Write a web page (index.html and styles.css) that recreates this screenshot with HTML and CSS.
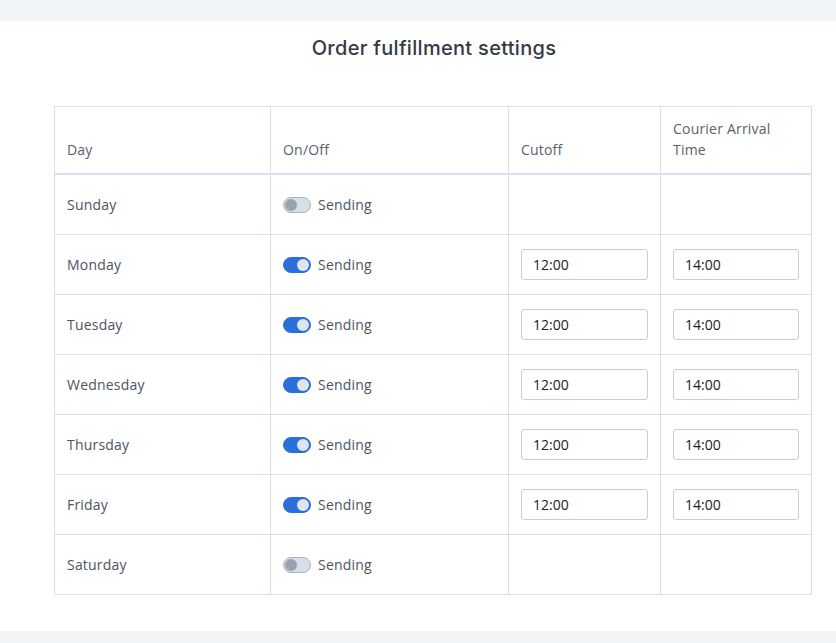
FILE: index.html
```html
<!DOCTYPE html>
<html>
<head>
<meta charset="utf-8">
<link rel="stylesheet" href="styles.css">
</head>
<body>
<div class="panel">
  <h1 class="title">Order fulfillment settings</h1>
  <table class="grid">
    <colgroup>
      <col class="c1"><col class="c2"><col class="c3"><col class="c4">
    </colgroup>
    <thead>
      <tr><th>Day</th><th>On/Off</th><th>Cutoff</th><th>Courier Arrival Time</th></tr>
    </thead>
    <tbody>
      <tr><td>Sunday</td><td><span class="sw"><span class="tg"></span>Sending</span></td><td></td><td></td></tr>
      <tr><td>Monday</td><td><span class="sw"><span class="tg on"></span>Sending</span></td><td><input class="time" value="12:00"></td><td><input class="time" value="14:00"></td></tr>
      <tr><td>Tuesday</td><td><span class="sw"><span class="tg on"></span>Sending</span></td><td><input class="time" value="12:00"></td><td><input class="time" value="14:00"></td></tr>
      <tr><td>Wednesday</td><td><span class="sw"><span class="tg on"></span>Sending</span></td><td><input class="time" value="12:00"></td><td><input class="time" value="14:00"></td></tr>
      <tr><td>Thursday</td><td><span class="sw"><span class="tg on"></span>Sending</span></td><td><input class="time" value="12:00"></td><td><input class="time" value="14:00"></td></tr>
      <tr><td>Friday</td><td><span class="sw"><span class="tg on"></span>Sending</span></td><td><input class="time" value="12:00"></td><td><input class="time" value="14:00"></td></tr>
      <tr><td>Saturday</td><td><span class="sw"><span class="tg"></span>Sending</span></td><td></td><td></td></tr>
    </tbody>
  </table>
</div>
</body>
</html>
```
FILE: styles.css
```css
html, body { margin: 0; padding: 0; }
body {
  background: #f2f5f8;
  font-family: "Open Sans", "Noto Sans", sans-serif;
  color: #4b5462;
  height: 643px;
  overflow: hidden;
}
.panel {
  background: #fff;
  margin-top: 21px;
  height: 610px;
  padding-top: 1px;
  box-sizing: border-box;
}
.title {
  margin: 14px 0 0 0;
  text-align: center;
  font-family: "Inter", sans-serif;
  font-size: 20px;
  font-weight: 500;
  letter-spacing: 0.3px;
  color: #343a44;
  line-height: 24px;
  padding-left: 32px;
}
.grid {
  margin: 46px 0 0 54px;
  border-collapse: collapse;
  table-layout: fixed;
  width: 757px;
  font-size: 14px;
  letter-spacing: 0.2px;
}
.c1 { width: 216px; }
.c2 { width: 238px; }
.c3 { width: 152px; }
.c4 { width: 151px; }
.grid th, .grid td {
  border: 1px solid #d7e1ea;
  padding: 0 12px;
  text-align: left;
}
.grid th {
  height: 53px;
  vertical-align: bottom;
  padding-bottom: 13px;
  font-weight: 500;
  color: #59616d;
  line-height: 21px;
  border-bottom: 2px solid #d7e1ea;
}
.grid td {
  height: 59px;
  vertical-align: middle;
  color: #4b5462;
}
.sw { display: flex; align-items: center; gap: 7px; }
.tg {
  width: 28px;
  height: 16px;
  border-radius: 8px;
  background: #d6dfe8;
  border: 1px solid #a9b2bc;
  box-sizing: border-box;
  position: relative;
}
.tg::after {
  content: "";
  position: absolute;
  left: 1px;
  top: 1px;
  width: 12px;
  height: 12px;
  border-radius: 50%;
  background: #9aa3ad;
}
.tg.on { background: #2a6fdb; border-color: #2a6fdb; }
.tg.on::after { left: auto; right: 1px; background: #dfe5ec; }
.time {
  width: 100%;
  height: 31px;
  box-sizing: border-box;
  border: 1px solid #c9cdd2;
  border-radius: 3px;
  padding: 0 11px;
  font: 14px "Open Sans", sans-serif;
  color: #222;
  display: block;
}
```
